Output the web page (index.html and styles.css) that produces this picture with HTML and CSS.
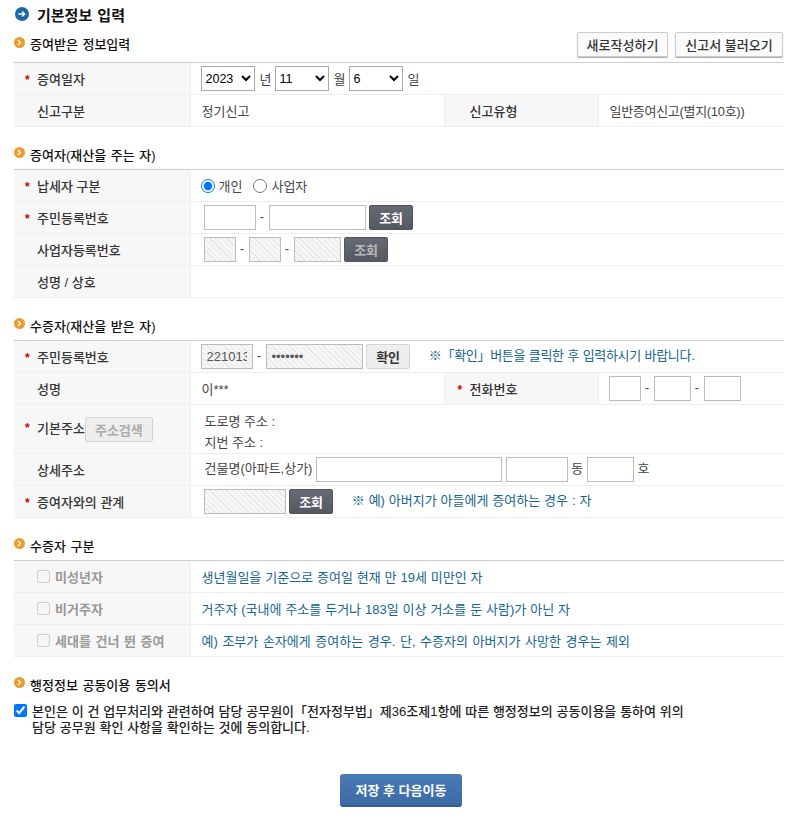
FILE: index.html
```html
<!DOCTYPE html>
<html lang="ko">
<head>
  <meta charset="utf-8">
  <title>기본정보 입력</title>
  <link rel="stylesheet" href="styles.css">
</head>
<body>
  <div class="page">
    <h1 class="title">
      <svg class="icon-blue" viewBox="0 0 14 14"><circle cx="7" cy="7" r="7" fill="#1d6aa5"/><path d="M3.5 7h6M7.2 4.6 9.6 7l-2.4 2.4" fill="none" stroke="#fff" stroke-width="1.4"/></svg>
      기본정보 입력
    </h1>

    <div class="head-row">
      <h2 class="sub-title">
        <svg class="icon-orange" viewBox="0 0 11 11"><circle cx="5.5" cy="5.5" r="5.5" fill="#f09a2a"/><path d="M4 3l2.5 2.5L4 8" fill="none" stroke="#fff" stroke-width="1.4"/></svg>
        증여받은 정보입력
      </h2>
      <div class="head-btns">
        <button type="button" class="btn-white new">새로작성하기</button>
        <button type="button" class="btn-white load">신고서 불러오기</button>
      </div>
    </div>
    <table class="form-table">
      <colgroup><col class="col-th"><col class="col-td"><col class="col-th2"><col></colgroup>
      <tr>
        <th><span class="star">*</span>증여일자</th>
        <td colspan="3" class="flush">
          <div class="date-row">
            <select class="sel"><option>2023</option></select><span class="unit">년</span>
            <select class="sel"><option>11</option></select><span class="unit">월</span>
            <select class="sel"><option>6</option></select><span class="unit">일</span>
          </div>
        </td>
      </tr>
      <tr>
        <th>신고구분</th>
        <td>정기신고</td>
        <th class="th2">신고유형</th>
        <td class="td2 type-name">일반증여신고(별지(10호))</td>
      </tr>
    </table>

    <section class="sec">
      <h2 class="sub-title">
        <svg class="icon-orange" viewBox="0 0 11 11"><circle cx="5.5" cy="5.5" r="5.5" fill="#f09a2a"/><path d="M4 3l2.5 2.5L4 8" fill="none" stroke="#fff" stroke-width="1.4"/></svg>
        증여자(재산을 주는 자)
      </h2>
      <table class="form-table">
        <colgroup><col class="col-th"><col></colgroup>
        <tr>
          <th><span class="star">*</span>납세자 구분</th>
          <td class="flush">
            <div class="radio-row">
              <label class="radio"><input type="radio" name="giver" checked>개인</label>
              <label class="radio"><input type="radio" name="giver">사업자</label>
            </div>
          </td>
        </tr>
        <tr>
          <th><span class="star">*</span>주민등록번호</th>
          <td class="inset">
            <input type="text" class="w52"><span class="dash">-</span><input type="text" class="w97">
            <button type="button" class="btn-dark">조회</button>
          </td>
        </tr>
        <tr>
          <th>사업자등록번호</th>
          <td class="inset">
            <input type="text" class="w32 hatch" disabled><span class="dash">-</span><input type="text" class="w32 hatch" disabled><span class="dash">-</span><input type="text" class="w47 hatch" disabled>
            <button type="button" class="btn-dark off">조회</button>
          </td>
        </tr>
        <tr>
          <th>성명 / 상호</th>
          <td></td>
        </tr>
      </table>
    </section>

    <section class="sec">
      <h2 class="sub-title">
        <svg class="icon-orange" viewBox="0 0 11 11"><circle cx="5.5" cy="5.5" r="5.5" fill="#f09a2a"/><path d="M4 3l2.5 2.5L4 8" fill="none" stroke="#fff" stroke-width="1.4"/></svg>
        수증자(재산을 받은 자)
      </h2>
      <table class="form-table">
        <colgroup><col class="col-th"><col class="col-td"><col class="col-th2"><col></colgroup>
        <tr>
          <th><span class="star">*</span>주민등록번호</th>
          <td colspan="3" class="flush">
            <input type="text" class="w52 hatch" value="221013" readonly><span class="dash">-</span><input type="password" class="w97 hatch" value="1234567" readonly>
            <button type="button" class="btn-light">확인</button>
            <span class="note note-first">※「확인」버튼을 클릭한 후 입력하시기 바랍니다.</span>
          </td>
        </tr>
        <tr>
          <th>성명</th>
          <td>이***</td>
          <th class="th2"><span class="star">*</span>전화번호</th>
          <td class="td2 phone">
            <input type="text" class="w32"><span class="dash">-</span><input type="text" class="w37"><span class="dash">-</span><input type="text" class="w37">
          </td>
        </tr>
        <tr class="row-tall">
          <th><span class="star">*</span>기본주소<button type="button" class="btn-search" disabled>주소검색</button></th>
          <td colspan="3" class="addr addr-lines">
            <div>도로명 주소 :</div>
            <div>지번 주소 :</div>
          </td>
        </tr>
        <tr>
          <th>상세주소</th>
          <td colspan="3" class="addr">
            건물명(아파트,상가)
            <input type="text" class="w186"> <input type="text" class="w62"> 동 <input type="text" class="w47"> 호
          </td>
        </tr>
        <tr>
          <th><span class="star">*</span>증여자와의 관계</th>
          <td colspan="3" class="inset">
            <input type="text" class="w82 hatch" disabled>
            <button type="button" class="btn-dark">조회</button>
            <span class="note note-second">※ 예) 아버지가 아들에게 증여하는 경우 : 자</span>
          </td>
        </tr>
      </table>
    </section>

    <section class="sec">
      <h2 class="sub-title">
        <svg class="icon-orange" viewBox="0 0 11 11"><circle cx="5.5" cy="5.5" r="5.5" fill="#f09a2a"/><path d="M4 3l2.5 2.5L4 8" fill="none" stroke="#fff" stroke-width="1.4"/></svg>
        수증자 구분
      </h2>
      <table class="form-table">
        <colgroup><col class="col-th"><col></colgroup>
        <tr>
          <th><label class="check-off"><input type="checkbox" disabled>미성년자</label></th>
          <td class="note">생년월일을 기준으로 증여일 현재 만 19세 미만인 자</td>
        </tr>
        <tr>
          <th><label class="check-off"><input type="checkbox" disabled>비거주자</label></th>
          <td class="note">거주자 (국내에 주소를 두거나 183일 이상 거소를 둔 사람)가 아닌 자</td>
        </tr>
        <tr>
          <th><label class="check-off"><input type="checkbox" disabled>세대를 건너 뛴 증여</label></th>
          <td class="note spaced">예) 조부가 손자에게 증여하는 경우. 단, 수증자의 아버지가 사망한 경우는 제외</td>
        </tr>
      </table>
    </section>

    <section class="sec">
      <h2 class="sub-title">
        <svg class="icon-orange" viewBox="0 0 11 11"><circle cx="5.5" cy="5.5" r="5.5" fill="#f09a2a"/><path d="M4 3l2.5 2.5L4 8" fill="none" stroke="#fff" stroke-width="1.4"/></svg>
        행정정보 공동이용 동의서
      </h2>
      <label class="agree">
        <input type="checkbox" checked>
        <span>본인은 이 건 업무처리와 관련하여 담당 공무원이「전자정부법」제36조제1항에 따른 행정정보의 공동이용을 통하여 위의<br>담당 공무원 확인 사항을 확인하는 것에 동의합니다.</span>
      </label>
    </section>

    <div class="bottom">
      <button type="button" class="btn-save">저장 후 다음이동</button>
    </div>
  </div>
</body>
</html>
```

FILE: styles.css
```css
/* base */
* {
  box-sizing: border-box;
}

body {
  margin: 0;
  background-color: #fff;
  color: #333;
  font-family: "Liberation Sans", "Noto Sans CJK KR", sans-serif;
  font-size: 13px;
}

h1,
h2 {
  margin: 0;
}

.page {
  padding: 0 7px 0 14px;
}

/* headings */
.title {
  display: flex;
  align-items: center;
  height: 28px;
  padding-left: 1px;
  color: #111;
  font-size: 15px;
  font-weight: bold;
  word-spacing: 1px;
}

.icon-blue {
  width: 14px;
  height: 14px;
  margin-right: 8px;
}

.head-row {
  display: flex;
  justify-content: space-between;
  align-items: center;
  height: 25px;
  margin-top: 4px;
  margin-bottom: 5px;
}

.head-btns {
  display: flex;
  gap: 7px;
  padding-right: 1px;
}

.sub-title {
  display: flex;
  align-items: center;
  height: 16px;
  padding-bottom: 2px;
  color: #111;
  font-size: 13px;
  font-weight: 500;
  word-spacing: 1px;
}

.icon-orange {
  width: 11px;
  height: 11px;
  margin-right: 5px;
  margin-top: -3px;
}

.sec {
  margin-top: 20px;
}

.sec .sub-title {
  margin-bottom: 6px;
}

/* tables */
.form-table {
  width: 100%;
  border-collapse: collapse;
  table-layout: fixed;
  border-top: 1px solid #ccc;
  border-bottom: 1px solid #ccc;
}

.col-th {
  width: 176px;
}

.col-td {
  width: 254px;
}

.col-th2 {
  width: 154px;
}

.form-table tr {
  height: 32px;
}

.form-table tr.row-tall {
  height: 49px;
}

.form-table th,
.form-table td {
  padding: 0 0 0 11px;
  border-bottom: 1px solid #eee;
  font-weight: normal;
  text-align: left;
  white-space: nowrap;
}

.form-table td {
  color: #444;
}

.form-table th {
  padding-left: 23px;
  background-color: #f7f7f7;
  border-right: 1px solid #eee;
  color: #333;
  font-weight: 500;
}

.form-table .th2 {
  padding-left: 25px;
  border-left: 1px solid #eee;
}

.form-table .td2 {
  padding-left: 11px;
}

.form-table .flush {
  padding-left: 10px;
}

.form-table .inset {
  padding-left: 13px;
}

.form-table .addr {
  padding-left: 14px;
}

.form-table .addr-lines {
  padding-top: 6px;
  vertical-align: top;
}

.form-table .phone {
  padding-left: 10px;
}

.type-name {
  letter-spacing: -0.3px;
}

.addr div {
  line-height: 21px;
}

.star {
  display: inline-block;
  width: 12px;
  margin-left: -12px;
  color: #c00;
  font-size: 12px;
  font-weight: bold;
}

.date-row,
.radio-row {
  display: flex;
  align-items: center;
}

.unit {
  width: 12px;
  margin: 0 3px 0 5px;
}

.dash {
  display: inline-block;
  width: 13px;
  text-align: center;
}

.form-table .note,
.note {
  color: #14658f;
  word-spacing: 0.3px;
}

.form-table .spaced {
  word-spacing: 1px;
}

.note-first {
  margin-left: 15px;
  letter-spacing: -0.3px;
}

.note-second {
  margin-left: 15px;
}

/* inputs */
.sel {
  width: 54px;
  height: 25px;
  padding: 0;
  border: 1px solid #aaa;
  background-color: #fff;
  font: 12.5px "Liberation Sans", sans-serif;
}

input[type="text"],
input[type="password"] {
  height: 25px;
  padding: 0 5px;
  border: 1px solid #bbb;
  background-color: #fff;
  color: #555;
  font: 13px "Liberation Sans", sans-serif;
  vertical-align: middle;
}

.w32 { width: 32px; }
.w37 { width: 37px; }
.w47 { width: 47px; }
.w52 { width: 52px; }
.w62 { width: 62px; }
.w82 { width: 82px; }
.w97 { width: 97px; }
.w186 { width: 186px; }

input.hatch {
  background-color: #f6f6f6;
  background-image: repeating-linear-gradient(45deg, #f6f6f6 0, #f6f6f6 3px, #e6e6e6 3px, #e6e6e6 4px);
}

.radio {
  display: flex;
  align-items: center;
  margin-right: 11px;
}

.radio input {
  width: 14px;
  height: 14px;
  margin: 0 4px 0 0;
}

.check-off {
  display: flex;
  align-items: center;
  color: #999;
  font-weight: bold;
  word-spacing: 1px;
}

.check-off input {
  width: 13px;
  height: 13px;
  margin: 0 5px 0 0;
}

.agree {
  display: flex;
  align-items: flex-start;
  margin-top: 11px;
  color: #222;
  font-weight: 500;
  line-height: 16px;
  word-spacing: 0.2px;
}

.agree input {
  width: 13px;
  height: 13px;
  margin: 0 5px 0 0;
}

/* buttons */
button {
  font-family: "Liberation Sans", "Noto Sans CJK KR", sans-serif;
  font-size: 13px;
  vertical-align: middle;
}

.btn-white {
  height: 25px;
  padding: 0;
  border: 1px solid #ccc;
  border-radius: 2px;
  background-color: #fafafa;
  box-shadow: 0 1px 1px #aaa;
  color: #333;
  font-weight: 500;
}

.btn-white.new {
  width: 91px;
}

.btn-white.load {
  width: 108px;
}

.btn-dark {
  width: 44px;
  height: 25px;
  padding: 0;
  border: 1px solid #555;
  border-radius: 2px;
  background: linear-gradient(#666a75, #555963);
  color: #fff;
  font-weight: bold;
}

.btn-dark.off {
  color: #bbb;
}

.btn-light {
  width: 44px;
  height: 25px;
  padding: 0;
  border: 1px solid #d5d5d5;
  border-radius: 2px;
  background-color: #eee;
  color: #333;
  font-weight: bold;
}

.btn-search {
  width: 68px;
  height: 25px;
  padding: 0;
  border: 1px solid #d5d5d5;
  border-radius: 2px;
  background-color: #eee;
  color: #aaa;
  font-weight: bold;
}

.bottom {
  display: flex;
  justify-content: center;
  margin-top: 38px;
  padding-left: 4px;
}

.btn-save {
  width: 122px;
  height: 33px;
  padding: 0;
  border: none;
  border-bottom: 2px solid #2f5f98;
  border-radius: 3px;
  background: linear-gradient(#4a7bb7, #3c6aa5);
  color: #fff;
  font-weight: bold;
}
```
